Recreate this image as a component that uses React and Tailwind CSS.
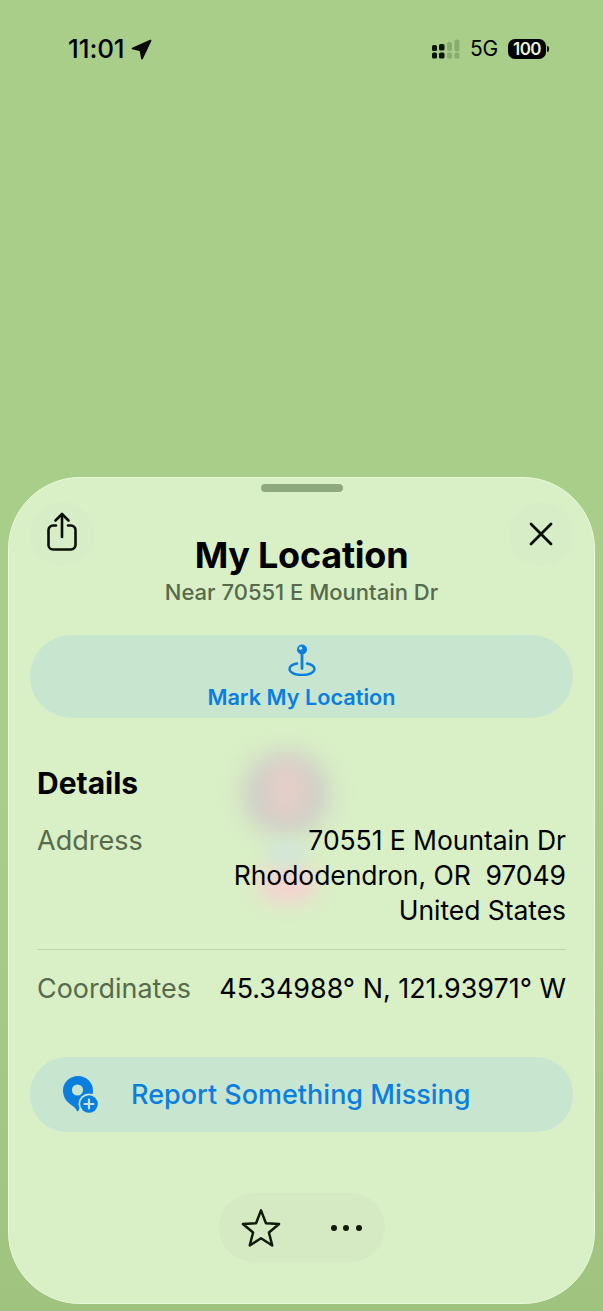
const font = { fontFamily: 'Inter, "Noto Sans", sans-serif' };

function SignalIcon() {
  return (
    <svg width="32" height="22" viewBox="0 0 32 22">
      <g fill="#0b1206">
        <rect x="1" y="7" width="5" height="6" rx="1.6" />
        <rect x="1" y="14.5" width="5" height="6" rx="1.6" />
        <rect x="8" y="6" width="5.5" height="6.5" rx="1.6" />
        <rect x="8" y="14.5" width="5.5" height="6" rx="1.6" />
      </g>
      <g fill="#8aab6f">
        <rect x="16" y="4" width="5" height="9" rx="2" />
        <rect x="16" y="14.5" width="5" height="6" rx="1.6" />
        <rect x="23.5" y="1.5" width="5" height="12" rx="2" />
        <rect x="23.5" y="14.5" width="5" height="6" rx="1.6" />
      </g>
    </svg>
  );
}

function StatusBar() {
  return (
    <div className="flex items-center justify-between pt-[36px] pl-[68px] pr-[54px] h-[62px] text-black">
      <div className="flex items-center gap-[6px]">
        <span className="text-[26px] leading-[26px] font-medium tracking-[-0.1px]">11:01</span>
        <svg width="21" height="21" viewBox="0 0 21 21">
          <path d="M19.5 1.5 L1.5 9.5 L9.5 11.5 L11 19.5 Z" fill="#0a0a0a" stroke="#0a0a0a" strokeWidth="1.8" strokeLinejoin="round" />
        </svg>
      </div>
      <div className="flex items-center">
        <SignalIcon />
        <span className="ml-[7px] text-[21px] leading-[24px] tracking-[-0.2px]">5G</span>
        <div className="ml-[10px] flex items-center">
          <div className="w-[38px] h-[20px] rounded-[7px] bg-black text-[#e9f2dc] text-[17px] leading-[20px] font-semibold text-center tracking-[-0.6px]">100</div>
          <div className="w-[2px] h-[6px] rounded-r-[2px] bg-black ml-[1px]" />
        </div>
      </div>
    </div>
  );
}

function CircleButton({ children }) {
  return (
    <div className="w-[64px] h-[64px] shrink-0 rounded-full bg-[#d6edc7] flex items-center justify-center">
      {children}
    </div>
  );
}

function ShareIcon() {
  return (
    <svg width="32" height="40" viewBox="0 0 32 40" fill="none" stroke="#0a0f06" strokeWidth="2.6" strokeLinecap="round" strokeLinejoin="round">
      <path d="M10 13.5 H7 a4.5 4.5 0 0 0 -4.5 4.5 V33 a4.5 4.5 0 0 0 4.5 4.5 H25 a4.5 4.5 0 0 0 4.5 -4.5 V18 a4.5 4.5 0 0 0 -4.5 -4.5 H22" />
      <path d="M16 25 V2.5" />
      <path d="M9.5 8.5 L16 2 L22.5 8.5" />
    </svg>
  );
}

function CloseIcon() {
  return (
    <svg width="26" height="26" viewBox="0 0 26 26" fill="none" stroke="#0a0f06" strokeWidth="2.8" strokeLinecap="round">
      <path d="M3 3 L23 23 M23 3 L3 23" />
    </svg>
  );
}

function PinIcon() {
  return (
    <svg width="28" height="32" viewBox="0 0 28 32" fill="none">
      <path d="M9 19.5 C4.5 20.5 1.5 22.5 1.5 25 C1.5 28.5 7 31 14 31 C21 31 26.5 28.5 26.5 25 C26.5 22.5 23.5 20.5 19 19.5" stroke="#0a7fe0" strokeWidth="2.4" strokeLinecap="round" />
      <rect x="12.6" y="9" width="2.8" height="17" rx="1.4" fill="#0a7fe0" />
      <circle cx="14" cy="5.5" r="5" fill="#0a7fe0" />
      <circle cx="12.6" cy="4.2" r="1.6" fill="#c8e6cf" />
    </svg>
  );
}

function ReportIcon() {
  return (
    <svg width="38" height="40" viewBox="0 0 38 40">
      <path d="M16 1 C7.5 1 1 7.5 1 15.5 C1 22 4.5 27 10 30.5 C12 31.8 14 33.5 15 36 C16 36.6 16.5 36 16.8 35 C18 31.5 20 30.5 23 28 C28 24 31 21 31 15.5 C31 7.5 24.5 1 16 1 Z" fill="#0a7fe0" />
      <circle cx="15.5" cy="15" r="5.6" fill="#c8e6cf" />
      <circle cx="27" cy="29" r="10.5" fill="#c8e6cf" />
      <circle cx="27" cy="29" r="8.8" fill="#0a7fe0" />
      <path d="M27 24.5 V33.5 M22.5 29 H31.5" stroke="#c8e6cf" strokeWidth="2.2" strokeLinecap="round" />
    </svg>
  );
}

function StarIcon() {
  return (
    <svg width="40" height="40" viewBox="0 0 42 42" fill="none">
      <path d="M21 2.5 L26.2 16 L40 16.8 L29.3 25.7 L32.8 39.3 L21 31.7 L9.2 39.3 L12.7 25.7 L2 16.8 L15.8 16 Z" stroke="#0f1a08" strokeWidth="2.6" strokeLinejoin="round" />
    </svg>
  );
}

function Sheet() {
  return (
    <div className="relative mx-[8px] h-[827px] rounded-[72px] bg-[#d9efc6] border border-[#e8f8d9] overflow-hidden">
      <div className="absolute left-[233px] top-[274px] w-[88px] h-[84px] rounded-full bg-[#cbc3c9] blur-[12px] opacity-75" />
      <div className="absolute left-[257px] top-[282px] w-[42px] h-[60px] rounded-full bg-[#eccfc8] blur-[10px] opacity-70" />
      <div className="absolute left-[250px] top-[388px] w-[58px] h-[36px] rounded-full bg-[#f9cfd2] blur-[10px] opacity-90" />
      <div className="absolute left-[258px] top-[362px] w-[40px] h-[26px] rounded-full bg-[#d2e6d6] blur-[7px]" />

      <div className="relative flex flex-col">
        <div className="mt-[6px] mx-auto w-[82px] h-[8px] rounded-full bg-[#8fa97f]" />

        <div className="flex justify-between px-[21px] mt-[10px]">
          <CircleButton><div className="-mt-[4px]"><ShareIcon /></div></CircleButton>
          <div className="flex flex-col items-center pt-[33px]">
            <h1 className="text-[36px] leading-[40px] font-bold tracking-[-0.25px] text-black">My Location</h1>
            <p className="mt-[5px] text-[22px] leading-[24px] font-medium text-[#566b4c]">Near 70551 E Mountain Dr</p>
          </div>
          <CircleButton><CloseIcon /></CircleButton>
        </div>

        <div className="mx-[21px] mt-[31px] h-[83px] rounded-[42px] bg-[#c8e6cf] flex flex-col items-center pt-[9px]">
          <PinIcon />
          <span className="mt-[8px] text-[21.7px] leading-[26px] font-semibold text-[#0a7fe0]">Mark My Location</span>
        </div>

        <div className="px-[28px] mt-[47px]">
          <h2 className="text-[30px] leading-[36px] font-bold text-black">Details</h2>
          <div className="flex justify-between mt-[22px] pb-[21px] border-b border-[#bed4ad] leading-[35px]">
            <span className="text-[#566b4c] text-[27px]">Address</span>
            <span className="text-right text-black text-[26.5px] tracking-[-0.05px]">70551 E Mountain Dr<br />Rhododendron, OR&nbsp; 97049<br />United States</span>
          </div>
          <div className="flex justify-between mt-[21px] text-[26.9px] leading-[35px]">
            <span className="text-[#566b4c]">Coordinates</span>
            <span className="text-black">45.34988° N, 121.93971° W</span>
          </div>
        </div>

        <div className="mx-[21px] mt-[51px] h-[75px] rounded-[37px] bg-[#c8e6cf] flex items-center pl-[32px]">
          <ReportIcon />
          <span className="ml-[31px] text-[27px] leading-[34px] font-medium text-[#0a7fe0]">Report Something Missing</span>
        </div>

        <div className="mx-auto mt-[61px] w-[166px] h-[69px] rounded-full bg-[#d5eac3] flex items-center pl-[22px]">
          <StarIcon />
          <div className="ml-[50px] flex gap-[6.5px]">
            <div className="w-[6px] h-[6px] rounded-full bg-[#0f1a08]" />
            <div className="w-[6px] h-[6px] rounded-full bg-[#0f1a08]" />
            <div className="w-[6px] h-[6px] rounded-full bg-[#0f1a08]" />
          </div>
        </div>
      </div>
    </div>
  );
}

export default function App() {
  return (
    <div style={font} className="w-[603px] h-[1311px] overflow-hidden bg-[linear-gradient(to_bottom,#a9ce8a_0%,#a9ce8a_60%,#a0c47f_100%)] flex flex-col">
      <StatusBar />
      <div className="h-[415px] shrink-0" />
      <Sheet />
    </div>
  );
}
